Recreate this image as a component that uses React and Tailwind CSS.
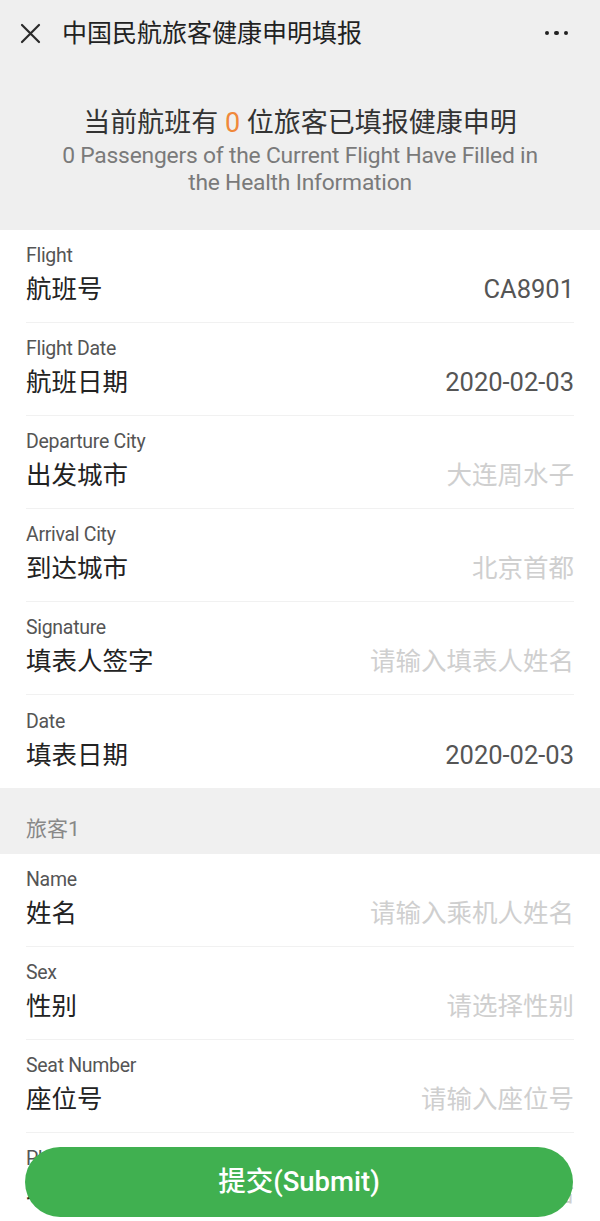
import React from "react";

const FONT = { fontFamily: 'Roboto, "Noto Sans CJK SC", sans-serif' };

const rows1 = [
  { en: "Flight", zh: "航班号", v: "CA8901", ph: false },
  { en: "Flight Date", zh: "航班日期", v: "2020-02-03", ph: false },
  { en: "Departure City", zh: "出发城市", v: "大连周水子", ph: true },
  { en: "Arrival City", zh: "到达城市", v: "北京首都", ph: true },
  { en: "Signature", zh: "填表人签字", v: "请输入填表人姓名", ph: true },
  { en: "Date", zh: "填表日期", v: "2020-02-03", ph: false, last: true },
];

const rows2 = [
  { en: "Name", zh: "姓名", v: "请输入乘机人姓名", ph: true },
  { en: "Sex", zh: "性别", v: "请选择性别", ph: true },
  { en: "Seat Number", zh: "座位号", v: "请输入座位号", ph: true },
  { en: "Phone Number", zh: "联系电话", v: "请输入联系电话", ph: true },
];

function Row({ r }) {
  return (
    <div className="px-[26px] bg-white">
      <div
        className={
          "flex items-end justify-between h-[93px] pb-[13px] " +
          (r.last ? "" : "border-b border-[#f1f1f1]")
        }
      >
        <div className="flex flex-col">
          <div className="text-[19.5px] leading-[26px] text-[#555] tracking-[-0.3px]">{r.en}</div>
          <div className="text-[25.5px] leading-[40px] text-[#222]">{r.zh}</div>
        </div>
        <div
          className={
            "text-[25.5px] leading-[40px] " + (r.ph ? "text-[#cfcfcf]" : "text-[#555]")
          }
        >
          {r.v}
        </div>
      </div>
    </div>
  );
}

export default function App() {
  return (
    <div className="relative w-[600px] h-[1221px] overflow-hidden bg-white" style={FONT}>
      <div className="bg-[#efefef] h-[230px]">
        <div className="flex items-center justify-between h-[66px] pl-[20px] pr-[32px]">
          <div className="flex items-center">
            <svg width="21" height="21" viewBox="0 0 21 21" className="mr-[21px]">
              <path d="M2 2L19 19M19 2L2 19" stroke="#2a2a2a" strokeWidth="2.2" strokeLinecap="round" />
            </svg>
            <span className="text-[25px] text-[#222] leading-none">中国民航旅客健康申明填报</span>
          </div>
          <div className="flex gap-[5px]">
            <span className="w-[4.5px] h-[4.5px] rounded-full bg-[#222]" />
            <span className="w-[4.5px] h-[4.5px] rounded-full bg-[#222]" />
            <span className="w-[4.5px] h-[4.5px] rounded-full bg-[#222]" />
          </div>
        </div>
        <div className="flex flex-col items-center pt-[38px]">
          <div className="text-[27px] leading-[38px] text-[#333]">
            当前航班有 <span className="text-[#f0883a]">0</span> 位旅客已填报健康申明
          </div>
          <div className="text-[22.8px] leading-[27px] text-[#7a7a7a] text-center w-[492px] tracking-[-0.2px]">
            0 Passengers of the Current Flight Have Filled in the Health Information
          </div>
        </div>
      </div>
      {rows1.map((r) => (
        <Row key={r.en} r={r} />
      ))}
      <div className="bg-[#f0f0f0] h-[66px] px-[26px] pt-[26px]">
        <div className="text-[21px] leading-[30px] text-[#888]">旅客1</div>
      </div>
      {rows2.map((r) => (
        <Row key={r.en} r={r} />
      ))}
      <div className="absolute left-[25px] right-[27px] top-[1147px] h-[70px] rounded-full bg-[#40b050] flex items-center justify-center">
        <span className="text-white text-[27.5px] font-medium">提交(Submit)</span>
      </div>
    </div>
  );
}
